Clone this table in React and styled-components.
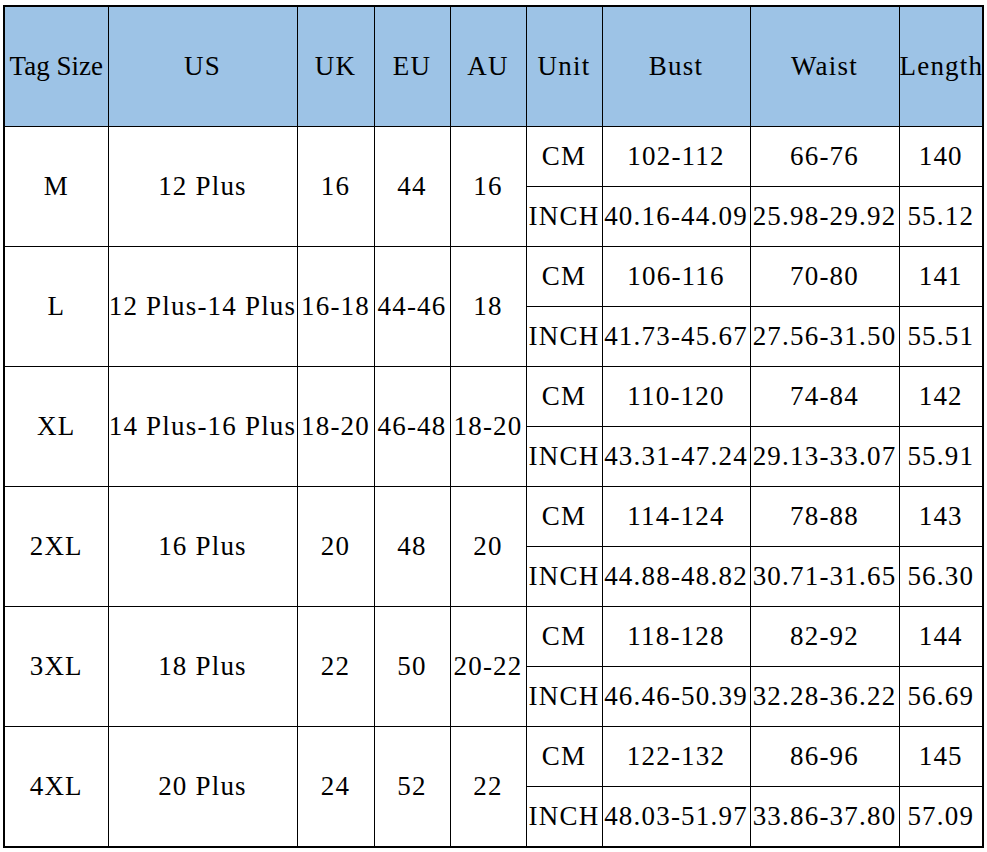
import React from "react";
import styled, { createGlobalStyle } from "styled-components";

const GlobalStyle = createGlobalStyle`
  html, body {
    margin: 0;
    padding: 0;
    background: #ffffff;
  }
  body {
    font-family: "Liberation Serif", "Times New Roman", serif;
    color: #000;
  }
`;

const Page = styled.div`
  padding: 5px 0 0 3px;
`;

const Table = styled.table`
  border-collapse: collapse;
  table-layout: fixed;
  width: 979px;
  border: 2px solid #000;
`;

const HeadCell = styled.th`
  height: 119px;
  padding: 0;
  background: #9dc3e6;
  border: 1px solid #000;
  font-weight: 400;
  font-size: 27px;
  letter-spacing: ${({ $tight }) => ($tight ? "0" : "1.2px")};
  white-space: nowrap;
  overflow: visible;
  text-align: center;
  vertical-align: middle;
`;

const Cell = styled.td`
  height: 59px;
  padding: 0;
  border: 1px solid #000;
  font-size: 27px;
  letter-spacing: 1.2px;
  white-space: nowrap;
  overflow: visible;
  text-align: center;
  vertical-align: middle;
`;

const widths = [104, 189, 77, 76, 76, 76, 148, 149, 84];
const headers = ["Tag Size", "US", "UK", "EU", "AU", "Unit", "Bust", "Waist", "Length"];

const sizes = [
  { tag: "M", us: "12 Plus", uk: "16", eu: "44", au: "16",
    cm: ["102-112", "66-76", "140"], inch: ["40.16-44.09", "25.98-29.92", "55.12"] },
  { tag: "L", us: "12 Plus-14 Plus", uk: "16-18", eu: "44-46", au: "18",
    cm: ["106-116", "70-80", "141"], inch: ["41.73-45.67", "27.56-31.50", "55.51"] },
  { tag: "XL", us: "14 Plus-16 Plus", uk: "18-20", eu: "46-48", au: "18-20",
    cm: ["110-120", "74-84", "142"], inch: ["43.31-47.24", "29.13-33.07", "55.91"] },
  { tag: "2XL", us: "16 Plus", uk: "20", eu: "48", au: "20",
    cm: ["114-124", "78-88", "143"], inch: ["44.88-48.82", "30.71-31.65", "56.30"] },
  { tag: "3XL", us: "18 Plus", uk: "22", eu: "50", au: "20-22",
    cm: ["118-128", "82-92", "144"], inch: ["46.46-50.39", "32.28-36.22", "56.69"] },
  { tag: "4XL", us: "20 Plus", uk: "24", eu: "52", au: "22",
    cm: ["122-132", "86-96", "145"], inch: ["48.03-51.97", "33.86-37.80", "57.09"] },
];

export default function App() {
  return (
    <>
      <GlobalStyle />
      <Page>
        <Table>
          <colgroup>
            {widths.map((w, i) => (
              <col key={i} style={{ width: w }} />
            ))}
          </colgroup>
          <thead>
            <tr>
              {headers.map((h, i) => (
                <HeadCell key={h} $tight={i === 0}>{h}</HeadCell>
              ))}
            </tr>
          </thead>
          <tbody>
            {sizes.map((s) => (
              <React.Fragment key={s.tag}>
                <tr>
                  <Cell rowSpan={2}>{s.tag}</Cell>
                  <Cell rowSpan={2}>{s.us}</Cell>
                  <Cell rowSpan={2}>{s.uk}</Cell>
                  <Cell rowSpan={2}>{s.eu}</Cell>
                  <Cell rowSpan={2}>{s.au}</Cell>
                  <Cell>CM</Cell>
                  {s.cm.map((v, i) => (
                    <Cell key={i}>{v}</Cell>
                  ))}
                </tr>
                <tr>
                  <Cell>INCH</Cell>
                  {s.inch.map((v, i) => (
                    <Cell key={i}>{v}</Cell>
                  ))}
                </tr>
              </React.Fragment>
            ))}
          </tbody>
        </Table>
      </Page>
    </>
  );
}
